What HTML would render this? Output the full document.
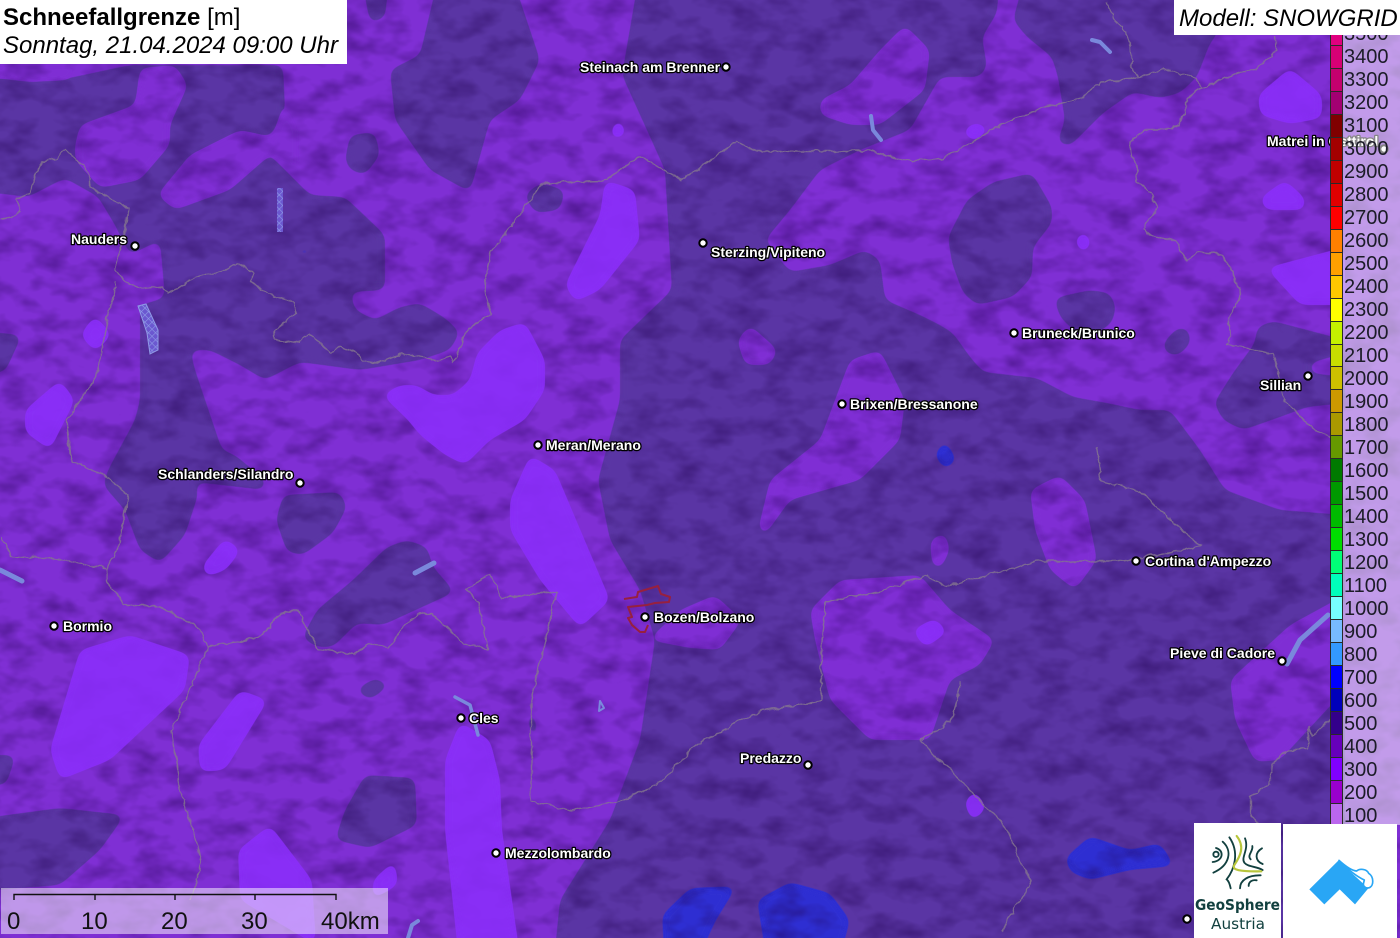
<!DOCTYPE html>
<html lang="de">
<head>
<meta charset="utf-8">
<title>Schneefallgrenze</title>
<style>
html,body{margin:0;padding:0;background:#7a2dce;}
body{width:1400px;height:938px;overflow:hidden;}
svg{display:block;font-family:"Liberation Sans",sans-serif;}
.city text{font:bold 14px "Liberation Sans",sans-serif;fill:#fff;stroke:#000;stroke-width:2.6px;paint-order:stroke;stroke-linejoin:round;}
.city circle{fill:#fff;stroke:#000;stroke-width:2;}
.lg rect{stroke:#2a2a2a;stroke-width:1;}
.lt text{font-size:20px;fill:#1c1c28;}
.sc text{font-size:24px;fill:#111;}
</style>
</head>
<body>
<svg width="1400" height="938" viewBox="0 0 1400 938" xmlns="http://www.w3.org/2000/svg">
<defs>
<filter id="sm" filterUnits="userSpaceOnUse" x="-40" y="-40" width="1480" height="1020">
<feGaussianBlur stdDeviation="5"/>
<feComponentTransfer><feFuncA type="linear" slope="14" intercept="-6.5"/></feComponentTransfer>
</filter>
<filter id="hs" filterUnits="userSpaceOnUse" x="0" y="0" width="1400" height="938" color-interpolation-filters="sRGB">
<feTurbulence type="fractalNoise" baseFrequency="0.03 0.05" numOctaves="3" seed="7"/>
<feColorMatrix type="matrix" values="0 0 0 0 0.12  0 0 0 0 0  0 0 0 0 0.3  0.9 0 0 0 -0.37"/>
</filter>
<filter id="wg" filterUnits="userSpaceOnUse" x="-10" y="-10" width="1420" height="960">
<feTurbulence type="turbulence" baseFrequency="0.07" numOctaves="2" seed="3" result="n"/>
<feDisplacementMap in="SourceGraphic" in2="n" scale="5" xChannelSelector="R" yChannelSelector="G"/>
</filter>
<pattern id="gl" width="5" height="5" patternUnits="userSpaceOnUse" patternTransform="rotate(45)">
<rect width="5" height="5" fill="#6b58d0"/>
<path d="M0,0 H5 M0,0 V5" stroke="#8f9ae6" stroke-width="1.2"/>
</pattern>
</defs>

<rect width="1400" height="938" fill="#7f2fd4"/>

<g filter="url(#sm)" fill="#5a35a4">
<polygon points="-30,78 60,80 130,65 283,65 285,110 270,137 240,130 190,155 155,195 95,195 65,178 28,197 -30,190"/>
<polygon points="97,195 160,175 270,155 310,195 345,197 385,235 385,290 350,292 355,310 375,320 400,307 420,303 445,318 460,332 450,350 420,360 360,370 300,362 265,380 240,365 210,350 190,350 195,370 222,450 235,455 265,480 265,490 195,482 198,495 185,535 160,563 140,550 125,510 103,485 108,470 135,420 140,400 140,305 165,298 160,240 130,255 115,225"/>
<polygon points="345,160 350,135 375,132 380,155 365,175 350,170"/>
<polygon points="390,70 420,55 440,-30 510,-30 540,60 520,100 490,120 470,192 430,170 395,120"/>
<polygon points="524,195 540,183 565,190 560,210 535,213"/>
<polygon points="360,-30 390,-30 385,18 370,23"/>
<polygon points="283,495 340,492 347,507 333,533 303,555 287,552 276,520"/>
<polygon points="302,638 317,610 353,580 387,547 407,540 427,547 433,567 455,592 420,608 383,625 357,623 333,647 317,647"/>
<polygon points="345,810 365,775 415,778 417,825 370,848 335,840"/>
<polygon points="-30,820 60,808 125,815 100,850 60,885 -30,892"/>
<polygon points="355,690 375,678 390,685 370,700"/>
<polygon points="-30,330 22,335 5,372 -30,375"/>
<polygon points="-30,755 16,755 6,785 -30,785"/>
<polygon points="527,718 533,708 539,735 530,735"/>
<polygon points="640,-30 1000,-30 997,13 982,37 987,67 980,77 940,77 910,130 860,150 820,170 790,210 765,240 790,272 830,265 865,250 880,260 885,300 920,315 940,325 953,333 970,357 983,372 1037,378 1073,397 1107,403 1140,410 1170,410 1200,450 1225,490 1280,510 1345,515 1345,970 553,970 560,900 610,820 640,740 655,640 640,590 610,540 598,480 620,400 620,340 672,290 665,170 622,75"/>
<polygon points="1027,-30 1013,20 1027,37 1052,57 1058,77 1065,120 1057,143 1070,146 1103,113 1133,92 1160,98 1180,93 1197,77 1210,43 1217,35 1225,-30"/>
<polygon points="948,237 967,200 993,182 1032,173 1052,207 1052,223 1033,247 1032,277 1013,297 977,305 963,293 952,263"/>
<polygon points="1054,298 1090,290 1110,293 1116,307 1112,323 1097,333 1073,330 1060,317"/>
<polygon points="1163,343 1177,328 1188,328 1191,343 1178,356 1165,353"/>
<polygon points="1214,403 1233,373 1255,343 1257,327 1273,321 1345,340 1345,353 1310,363 1310,373 1345,377 1345,403 1307,407 1280,417 1243,430 1223,420"/>
</g>

<g filter="url(#sm)" fill="#7f2fd4">
<polygon points="75,145 80,125 135,105 140,68 175,65 188,85 170,125 170,145 140,180 100,188 75,160"/>
<polygon points="157,195 190,155 240,130 272,137 285,100 300,130 300,170 270,155 230,190 175,210"/>
<polygon points="-30,65 80,65 70,80 30,82 -30,75"/>
<polygon points="820,100 850,85 880,50 905,25 930,50 925,90 880,125 850,125 820,115"/>
<polygon points="737,340 750,325 778,350 770,365 745,365"/>
<polygon points="758,530 770,480 820,440 850,360 880,350 905,400 900,440 860,480 790,500 765,535"/>
<polygon points="1030,490 1060,475 1085,500 1097,560 1075,590 1050,570 1035,530"/>
<polygon points="930,540 945,532 950,550 940,570 932,565"/>
<polygon points="810,610 840,580 920,575 950,610 995,640 980,665 950,680 930,740 870,740 830,700 815,640"/>
<polygon points="648,640 680,610 715,595 742,620 720,650 690,648"/>
<polygon points="1230,680 1290,625 1345,595 1345,690 1280,760 1255,762 1235,720"/>
</g>

<g filter="url(#sm)" fill="#2f2fd2">
<polygon points="1065,858 1090,836 1130,850 1160,843 1175,866 1130,870 1090,880 1070,872"/>
<polygon points="662,915 690,888 737,886 716,920 702,950 664,950"/>
<polygon points="757,900 790,882 830,893 850,920 842,950 765,950"/>
<polygon points="934,455 945,440 957,460 945,470"/>
<polygon points="293,250 305,247 316,251 304,257"/>
</g>

<rect width="1400" height="938" filter="url(#hs)"/>

<g filter="url(#sm)" fill="#8b2dfb" opacity=".88">
<polygon points="382,395 400,385 417,385 433,395 453,395 470,380 477,353 500,330 525,322 545,360 545,390 525,420 490,440 465,465 445,455 420,435 408,420"/>
<polygon points="510,500 530,455 555,470 610,600 580,628 540,580 510,530"/>
<polygon points="565,285 600,215 605,180 635,190 640,240 600,290 575,302"/>
<polygon points="25,410 60,380 75,400 50,450 25,432"/>
<polygon points="80,650 130,635 190,655 185,690 110,760 60,780 50,750"/>
<polygon points="198,745 240,690 268,700 225,770 200,772"/>
<polygon points="445,760 460,722 490,740 500,780 502,830 522,970 460,970 445,830"/>
<polygon points="238,850 270,825 312,880 316,945 240,900"/>
<polygon points="80,335 95,315 112,335 95,352"/>
<polygon points="202,566 225,538 241,550 226,570 206,577"/>
<polygon points="1258,95 1290,68 1322,95 1322,118 1290,124 1260,115"/>
<polygon points="1260,198 1285,180 1305,198 1305,210 1265,210"/>
<polygon points="1266,268 1345,247 1345,305 1300,305"/>
<polygon points="1074,240 1085,230 1092,245 1082,254"/>
<polygon points="961,132 975,122 990,128 975,142"/>
<polygon points="611,128 620,118 627,135 612,140"/>
<polygon points="912,630 935,618 948,632 925,648"/>
<polygon points="964,802 975,790 987,808 972,822"/>
<polygon points="373,880 395,860 398,885 372,900"/>
</g>

<polygon points="277,188 283,188 283,232 277,232" fill="url(#gl)"/>
<polygon points="138,306 146,304 158,330 158,350 150,354 147,333" fill="url(#gl)" stroke="#8f9ae6" stroke-width="1"/>
<g fill="none" stroke="#7a88dc" stroke-linecap="round" stroke-linejoin="round">
<path d="M1092,40 L1100,42 L1110,52" stroke-width="4"/>
<path d="M871,116 L873,130 L881,140" stroke-width="4"/>
<path d="M415,573 L434,563" stroke-width="5"/>
<path d="M0,570 L22,581" stroke-width="5"/>
<path d="M455,697 L470,705 L478,735" stroke-width="3.5"/>
<path d="M1287,664 L1300,640 L1328,615" stroke-width="5"/>
<path d="M600,701 L604,708 L599,711 Z" stroke-width="2"/>
<path d="M408,938 L412,925 L418,921" stroke-width="4"/>
</g>

<g fill="none" stroke="#85768f" stroke-width="1.4" stroke-linejoin="round" opacity=".8" filter="url(#wg)">
<path d="M0,218 L12,215 20,210 14,197 28,192 40,160 55,158 65,149 72,155 88,172 88,186 127,207 120,250 113,268 123,280 140,287 163,285 167,293 190,278 220,270 235,262 253,272 250,280 267,293 292,300 295,312 273,330 273,338 293,342 308,333 330,352 340,345 358,353 362,360 372,362 402,352 437,359 450,355 453,360 467,327 490,312 485,295 483,280 490,250 525,205 540,182 600,180 640,155 680,180 735,140 755,150 800,150 870,150 905,160 940,158 955,150 1002,122 1040,107 1080,97 1100,80 1136,78 1163,67 1195,78 1200,87 1240,70 1255,67 1275,50 1273,36"/>
<path d="M1106,0 L1113,17 1120,25 1130,45 1131,67 1136,77"/>
<path d="M1200,87 L1185,97 1185,107 1178,125 1160,128 1143,128 1128,140 1130,155 1135,165 1137,180 1150,192 1156,207 1142,227 1148,233 1175,240 1185,260 1195,250 1220,253 1233,273 1240,293 1226,320 1230,335 1225,343 1272,352 1283,400 1315,430 1330,437"/>
<path d="M1095,445 L1100,480 1140,490 1170,520 1200,545 1120,560 1035,560 945,585 925,575 880,590 825,600 820,640 820,700 760,710 700,740 660,780 620,800 570,810 530,800 530,700 555,590 500,597 490,573 465,588 477,600 487,648 463,643 430,612 417,613 400,628 387,647 367,642 353,653 317,648 297,610 283,610 257,637 207,645 170,730 180,790 200,860 190,900"/>
<path d="M207,645 L197,627 160,605 123,603 105,580 105,567 117,547 127,493 100,472 70,460 65,420 95,375 108,310 115,280"/>
<path d="M0,535 L10,555 60,558 105,567"/>
<path d="M960,680 L950,720 920,740 1000,820 1030,880 1000,930"/>
<path d="M1330,718 L1310,735 1308,725 1306,748 1285,750 1270,762 1270,780 1250,795 1250,815 1258,822"/>
</g>

<path d="M624,599 L637,597 638,592 658,586 661,594 670,597 669,602 655,603 647,605 628,607 632,617 628,618 632,625 640,632 645,632 648,625" fill="none" stroke="#97203f" stroke-width="2" stroke-linejoin="round"/>

<g class="city">
<text x="580" y="72">Steinach am Brenner</text><circle cx="726" cy="67" r="3.7"/>
<text x="71" y="244">Nauders</text><circle cx="135" cy="246" r="3.7"/>
<text x="711" y="257">Sterzing/Vipiteno</text><circle cx="703" cy="243" r="3.7"/>
<text x="1022" y="338">Bruneck/Brunico</text><circle cx="1014" cy="333" r="3.7"/>
<text x="850" y="409">Brixen/Bressanone</text><circle cx="842" cy="404" r="3.7"/>
<text x="546" y="450">Meran/Merano</text><circle cx="538" cy="445" r="3.7"/>
<text x="158" y="479">Schlanders/Silandro</text><circle cx="300" cy="483" r="3.7"/>
<text x="1260" y="390">Sillian</text><circle cx="1308" cy="376" r="3.7"/>
<text x="1267" y="146">Matrei in Osttirol</text><circle cx="1384" cy="149" r="3.7"/>
<text x="1145" y="566">Cortina d'Ampezzo</text><circle cx="1136" cy="561" r="3.7"/>
<text x="1170" y="658">Pieve di Cadore</text><circle cx="1282" cy="661" r="3.7"/>
<text x="63" y="631">Bormio</text><circle cx="54" cy="626" r="3.7"/>
<text x="654" y="622">Bozen/Bolzano</text><circle cx="645" cy="617" r="3.7"/>
<text x="469" y="723">Cles</text><circle cx="461" cy="718" r="3.7"/>
<text x="740" y="763">Predazzo</text><circle cx="808" cy="765" r="3.7"/>
<text x="505" y="858">Mezzolombardo</text><circle cx="496" cy="853" r="3.7"/>
<circle cx="1187" cy="919" r="3.7"/>
</g>

<rect x="1330" y="20" width="70" height="805" fill="#fff" fill-opacity=".52"/>

<g class="lg">
<rect x="1330.5" y="22.5" width="12" height="23" fill="#e0007f"/>
<rect x="1330.5" y="45.5" width="12" height="23" fill="#d60075"/>
<rect x="1330.5" y="68.5" width="12" height="23" fill="#c4006e"/>
<rect x="1330.5" y="91.5" width="12" height="23" fill="#a30072"/>
<rect x="1330.5" y="114.5" width="12" height="23" fill="#800000"/>
<rect x="1330.5" y="137.5" width="12" height="23" fill="#a30000"/>
<rect x="1330.5" y="160.5" width="12" height="23" fill="#c00000"/>
<rect x="1330.5" y="183.5" width="12" height="23" fill="#e00000"/>
<rect x="1330.5" y="206.5" width="12" height="23" fill="#ff0000"/>
<rect x="1330.5" y="229.5" width="12" height="23" fill="#ff8000"/>
<rect x="1330.5" y="252.5" width="12" height="23" fill="#ffa000"/>
<rect x="1330.5" y="275.5" width="12" height="23" fill="#ffc800"/>
<rect x="1330.5" y="298.5" width="12" height="23" fill="#ffff00"/>
<rect x="1330.5" y="321.5" width="12" height="23" fill="#c4f000"/>
<rect x="1330.5" y="344.5" width="12" height="22" fill="#c8dc00"/>
<rect x="1330.5" y="366.5" width="12" height="23" fill="#ccc000"/>
<rect x="1330.5" y="389.5" width="12" height="23" fill="#cc9900"/>
<rect x="1330.5" y="412.5" width="12" height="23" fill="#aa9900"/>
<rect x="1330.5" y="435.5" width="12" height="23" fill="#669900"/>
<rect x="1330.5" y="458.5" width="12" height="23" fill="#007a00"/>
<rect x="1330.5" y="481.5" width="12" height="23" fill="#009900"/>
<rect x="1330.5" y="504.5" width="12" height="23" fill="#00bb00"/>
<rect x="1330.5" y="527.5" width="12" height="23" fill="#00dd00"/>
<rect x="1330.5" y="550.5" width="12" height="23" fill="#00ff77"/>
<rect x="1330.5" y="573.5" width="12" height="23" fill="#00ffbb"/>
<rect x="1330.5" y="596.5" width="12" height="23" fill="#77ffff"/>
<rect x="1330.5" y="619.5" width="12" height="23" fill="#77bbff"/>
<rect x="1330.5" y="642.5" width="12" height="23" fill="#3399ff"/>
<rect x="1330.5" y="665.5" width="12" height="23" fill="#0000ff"/>
<rect x="1330.5" y="688.5" width="12" height="23" fill="#0000bb"/>
<rect x="1330.5" y="711.5" width="12" height="23" fill="#33008b"/>
<rect x="1330.5" y="734.5" width="12" height="23" fill="#6600bb"/>
<rect x="1330.5" y="757.5" width="12" height="23" fill="#8000ff"/>
<rect x="1330.5" y="780.5" width="12" height="23" fill="#9900cc"/>
<rect x="1330.5" y="803.5" width="12" height="22" fill="#bb66ee"/>
</g>

<g class="lt">
<text x="1344" y="40">3500</text>
<text x="1344" y="63">3400</text>
<text x="1344" y="86">3300</text>
<text x="1344" y="109">3200</text>
<text x="1344" y="132">3100</text>
<text x="1344" y="155">3000</text>
<text x="1344" y="178">2900</text>
<text x="1344" y="201">2800</text>
<text x="1344" y="224">2700</text>
<text x="1344" y="247">2600</text>
<text x="1344" y="270">2500</text>
<text x="1344" y="293">2400</text>
<text x="1344" y="316">2300</text>
<text x="1344" y="339">2200</text>
<text x="1344" y="362">2100</text>
<text x="1344" y="385">2000</text>
<text x="1344" y="408">1900</text>
<text x="1344" y="431">1800</text>
<text x="1344" y="454">1700</text>
<text x="1344" y="477">1600</text>
<text x="1344" y="500">1500</text>
<text x="1344" y="523">1400</text>
<text x="1344" y="546">1300</text>
<text x="1344" y="569">1200</text>
<text x="1344" y="592">1100</text>
<text x="1344" y="615">1000</text>
<text x="1344" y="638">900</text>
<text x="1344" y="661">800</text>
<text x="1344" y="684">700</text>
<text x="1344" y="707">600</text>
<text x="1344" y="730">500</text>
<text x="1344" y="753">400</text>
<text x="1344" y="776">300</text>
<text x="1344" y="799">200</text>
<text x="1344" y="822">100</text>
</g>

<rect x="0" y="0" width="347" height="64" fill="#fff"/>
<text x="3" y="25" font-size="24" fill="#000"><tspan font-weight="bold">Schneefallgrenze</tspan> [m]</text>
<text x="3" y="53" font-size="24" font-style="italic" fill="#000">Sonntag, 21.04.2024 09:00 Uhr</text>

<rect x="1174" y="0" width="226" height="35" fill="#fff"/>
<text x="1179" y="26" font-size="24" font-style="italic" fill="#000">Modell: SNOWGRID</text>

<rect x="1" y="888" width="387" height="46" fill="#fff" fill-opacity=".5"/>
<path d="M14,900 V894.5 H336 V900 M95,894.5 V900 M175,894.5 V900 M255,894.5 V900" fill="none" stroke="#111" stroke-width="1.4"/>
<g class="sc">
<text x="7" y="929">0</text>
<text x="81" y="929">10</text>
<text x="161" y="929">20</text>
<text x="241" y="929">30</text>
<text x="321" y="929">40km</text>
</g>

<rect x="1194" y="823" width="87" height="115" fill="#fff"/>
<rect x="1283" y="824" width="114" height="114" fill="#fff"/>

<g transform="translate(1190,820) scale(.33333)" fill="none" stroke="#12403f" stroke-width="5.5" stroke-linecap="round">
<circle cx="78" cy="103" r="8"/>
<path d="M78,84 C102,90 102,122 68,126"/>
<path d="M98,65 C128,92 120,136 70,158"/>
<path d="M118,52 C150,98 132,150 110,178 C118,184 120,196 122,205"/>
<path d="M165,55 C178,88 152,112 163,128 C175,142 198,138 218,150"/>
<path d="M187,78 C190,95 170,105 182,118"/>
<path d="M216,85 C194,98 194,122 218,132"/>
<path d="M150,205 C150,180 176,165 212,166"/>
<path d="M176,198 C176,186 186,178 200,181"/>
<path d="M140,48 C166,80 150,110 133,135 C124,150 150,155 214,154" stroke="#b8c63c" stroke-width="6.5"/>
</g>
<text x="1195" y="910" font-size="15.5" font-weight="bold" fill="#12403f" font-family="'DejaVu Sans','Liberation Sans',sans-serif" textLength="85" lengthAdjust="spacingAndGlyphs">GeoSphere</text>
<text x="1211" y="929" font-size="15.5" fill="#12403f" font-family="'DejaVu Sans','Liberation Sans',sans-serif" textLength="54" lengthAdjust="spacingAndGlyphs">Austria</text>

<g transform="translate(1190,820) scale(.33333)">
<path d="M358,208 L445,122 L535,205 L495,253 L449,208 L403,253 Z" fill="#29a6f5"/>
<path d="M447,121 C468,140 488,152 500,153 C508,145 530,146 536,160 C552,170 552,198 538,203 C528,206 520,200 520,192 L523,180 C505,172 480,155 447,121 Z" fill="#fff" stroke="#29a6f5" stroke-width="5" stroke-linejoin="round"/>
</g>
</svg>
</body>
</html>
